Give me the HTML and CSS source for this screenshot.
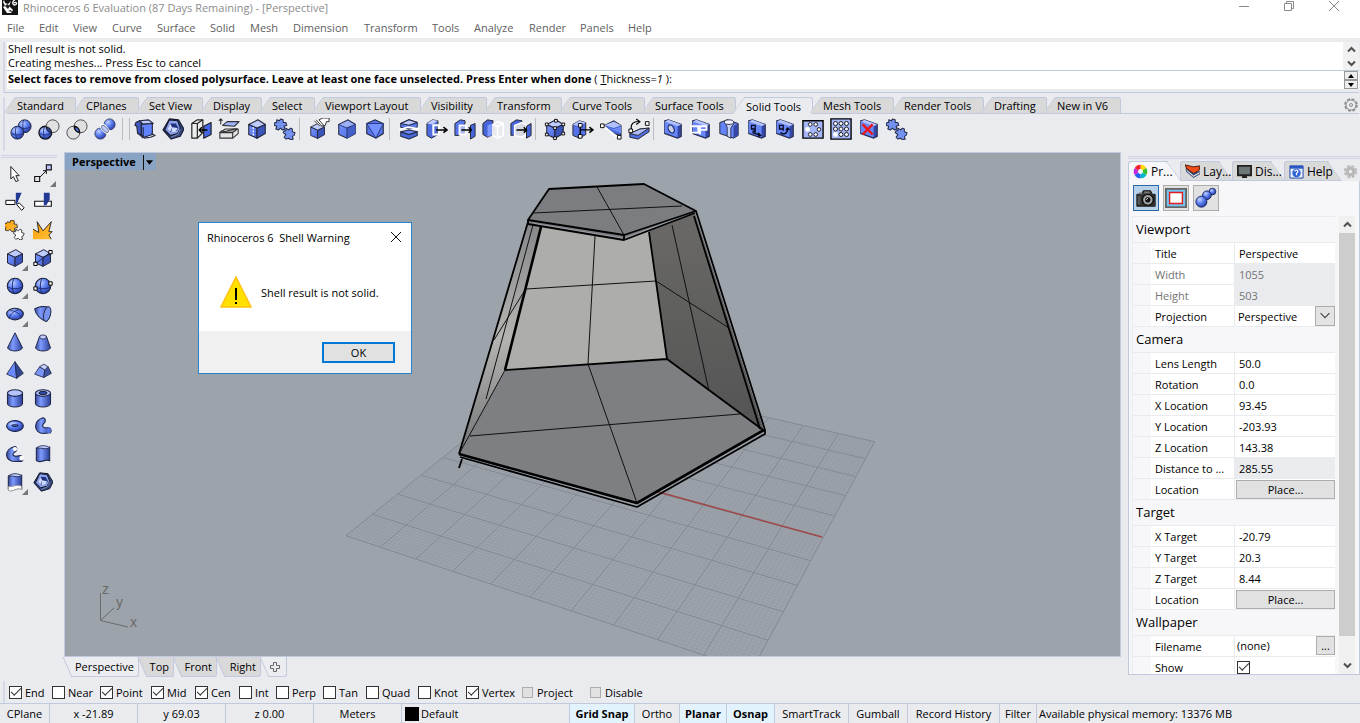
FILE: index.html
```html
<!DOCTYPE html>
<html lang="en">
<head>
<meta charset="utf-8">
<title>Rhinoceros 6 Evaluation (87 Days Remaining) - [Perspective]</title>
<link rel="stylesheet" href="styles.css">
</head>
<body>
<svg class="defs" width="0" height="0" aria-hidden="true">
  <defs>
    <radialGradient id="ball" cx=".35" cy=".3" r=".75"><stop offset="0" stop-color="#c6d3ff"/><stop offset=".45" stop-color="#6285f5"/><stop offset="1" stop-color="#2338a0"/></radialGradient>
    <linearGradient id="side"><stop offset="0" stop-color="#36499b"/><stop offset=".35" stop-color="#7d9bff"/><stop offset="1" stop-color="#2c3f96"/></linearGradient>
    <linearGradient id="face" x2="1" y2="1"><stop offset="0" stop-color="#7a98ff"/><stop offset="1" stop-color="#4a67dd"/></linearGradient>
    <linearGradient id="gold" x2="1" y2="1"><stop offset="0" stop-color="#ff9a00"/><stop offset="1" stop-color="#ffc23c"/></linearGradient>
  </defs>
  <symbol id="cube" viewBox="0 0 24 24"><g stroke="#23263a" stroke-width="1.2" stroke-linejoin="round"><path d="M3 7l9 4v11l-9-4z" fill="url(#face)"/><path d="M12 11l9-4v10l-9 5z" fill="#3c55bd"/><path d="M3 7l10-5 8 5-9 4z" fill="#becbff"/></g></symbol>
  <symbol id="sphere" viewBox="0 0 24 24"><circle cx="12" cy="12" r="9.3" fill="url(#ball)" stroke="#1c2236" stroke-width="1.3"/><path d="M3 13c5 3 13 3 18 0M11 3c-3 5-3 13 0 18" fill="none" stroke="#1d2d7a" stroke-width="1.2"/></symbol>
  <symbol id="union" viewBox="0 0 24 24"><circle cx="16" cy="9" r="7" fill="url(#ball)" stroke="#1c2236"/><circle cx="8" cy="16" r="7" fill="url(#ball)" stroke="#1c2236"/><path d="M2 17c4 2 8 2 12 0M7 9c-2 5-1 10 1 14M10 10c4 2 8 2 12 0M15 2c-2 5-1 10 1 13" fill="none" stroke="#20307a"/></symbol>
  <symbol id="diff" viewBox="0 0 24 24"><circle cx="8" cy="16" r="7" fill="url(#ball)" stroke="#111" stroke-width="1.4"/><circle cx="16" cy="9" r="7" fill="#ddd" fill-opacity=".75" stroke="#444"/><path d="M9 10a7 7 0 0 1 6 6 7 7 0 0 1-6-6z" fill="#2c469f" stroke="#111"/><path d="M2 17c4 2 8 2 11 0M7 10c-2 5-1 10 1 13" fill="none" stroke="#20307a"/></symbol>
  <symbol id="inter" viewBox="0 0 24 24"><g fill="#ddd" fill-opacity=".8" stroke="#444"><circle cx="8" cy="16" r="7"/><circle cx="16" cy="9" r="7"/></g><path d="M9 9a7 7 0 0 1 6 7 7 7 0 0 1-6-7z" fill="#4c6cde" stroke="#111" stroke-width="1.5"/></symbol>
  <symbol id="split" viewBox="0 0 24 24"><circle cx="17" cy="7" r="6" fill="url(#ball)" stroke="#34406a"/><circle cx="7" cy="17" r="6" fill="url(#ball)" stroke="#34406a"/><ellipse cx="12" cy="12" rx="2.4" ry="6" transform="rotate(-42 12 12)" fill="#c8d2f4" stroke="#fff" stroke-width="2"/><ellipse cx="12" cy="12" rx="2.2" ry="5" transform="rotate(-42 12 12)" fill="#bac9ff" stroke="#555" stroke-width=".8"/></symbol>
  <symbol id="shell" viewBox="0 0 24 24"><g stroke="#20263e" stroke-width="1.2" stroke-linejoin="round"><path d="M2 5l4-2 2 2v14l-4-2-1-8-2-1z" fill="#4058bd"/><path d="M6 3l10-1 5 4-11 1z" fill="#bdcaff"/><path d="M8 7l12-1v12l-9 3-3-3z" fill="#6283ff"/><path d="M10 10v12M19 17l4 2-5 2-7 1M5 17l5 5" fill="none"/></g></symbol>
  <symbol id="nut" viewBox="0 0 24 24"><g stroke="#15192c" stroke-width="1.2" stroke-linejoin="round"><path d="M8 1l10 1 6 10-4 8-10 3L1 13z" fill="#34477e"/><path d="M8 2l9 1 3 8-3 6-8 2-6-6z" fill="#8ba3ee"/></g><path d="M9 6l6 0 3 5-3 4-5 1-4-4z" fill="#20307a"/><path d="M9 6l2 4-2 5-3-3zM11 10l6 1-2 4-5 1z" fill="#cfdaff"/><path d="M20 12l-3 6-7 3" fill="none" stroke="#8090bb"/></symbol>
  <symbol id="caps" viewBox="0 0 24 24"><g stroke="#222" stroke-width="1.3" stroke-linejoin="round"><path d="M2 6l6-4h6v14l-6 6H2z" fill="#eceded"/><path d="M2 6h6v16M8 6l6-4" fill="none"/><path d="M15 9l8-4v13l-8 4z" fill="#4667e5"/><path d="M19 13h-9m3-3l-3 3 3 3" fill="none" stroke="#000" stroke-width="1.6"/></g></symbol>
  <symbol id="layers" viewBox="0 0 24 24"><g stroke="#333" stroke-width="1.2" stroke-linejoin="round"><path d="M2 16l6-4h14v5l-6 5H2z" fill="#e4e4e4"/><path d="M4 14c5 3 9-3 17-2l-5 4H2z" fill="#999"/><path d="M16 16v6" fill="none"/><path d="M5 8l5-4h13l-5 5z" fill="#9fb3ff"/><path d="M3 7V1M1 3l2-2 2 2" fill="none"/></g></symbol>
  <symbol id="boxdash" viewBox="0 0 24 24"><use href="#cube"/><path d="M8 10v10" stroke="#fff" stroke-width="1.5" stroke-dasharray="2 1.5"/></symbol>
  <symbol id="gearpair" viewBox="0 0 24 24"><g fill="#7493f0" stroke="#222946" stroke-width="1.1" stroke-linejoin="round"><path d="M3 2l3 1 1-2 3 1 0 3 3 0 1 3-3 1 1 3-3 1-2-2-2 2-3-1 1-3-3-1 1-3 2 0z"/><path d="M13 11l3 2 2-2 2 1v3l3 1-1 3-2 1 1 3-3 1-2-2-3 1-2-2 2-3-3-2 1-2 2 0z"/></g></symbol>
  <symbol id="cubeline" viewBox="0 0 24 24"><path d="M3 7l10-5 8 5v10l-9 5-9-4z" fill="url(#face)" stroke="#252942" stroke-width="1.2"/><path d="M12 11v11l9-5V7z" fill="#4460c9"/><path d="M3 7l9 4 9-4M12 11v11M12 11l8-5" fill="none" stroke="#27336c"/><path d="M4 7l9-4 7 4-8 3z" fill="#9cb0f5"/></symbol>
  <symbol id="cubehand" viewBox="0 0 24 24"><use href="#cube" x="0" y="4" width="21" height="20"/><path d="M7 3l7 7 5-2 1-4h3V0h-7l-4 2z" fill="#fff"/><path d="M7 3l6 6M9 2l6 7M12 2l5 6M14 9l5-1 1-4h3V0h-7l-4 2" fill="none" stroke="#222" stroke-width="1"/></symbol>
  <symbol id="cubetri" viewBox="0 0 24 24"><path d="M3 6l9-4 9 4v11l-8 5-10-5z" fill="#5674e8" stroke="#252942" stroke-width="1.2"/><path d="M3 6h18l-8 16z" fill="#7290ff" stroke="#26377c"/></symbol>
  <symbol id="slab" viewBox="0 0 24 24"><g stroke="#222942" stroke-width="1.1" stroke-linejoin="round"><path d="M3 6l9-4 9 3v5l-9 2-9-2z" fill="#5b7af2"/><path d="M3 6l9-4 9 3-9 3z" fill="#becbff"/><path d="M3 15l9 3 9-3v4l-9 4-9-3z" fill="#4966d8"/><path d="M3 15l9-2 9 2-9 3z" fill="#6d8aff"/></g><path d="M1 13l10-3 12 2" fill="none" stroke="#fff" stroke-width="2"/></symbol>
  <symbol id="pull" viewBox="0 0 24 24"><path d="M1 6l6-4 6 1v15l-7 4-5-3z" fill="#4e6cdf" stroke="#222"/><path d="M1 6l6-4 6 1-6 4z" fill="#becaff"/><path d="M8 8h6v10H8z" fill="none" stroke="#fff" stroke-width="2.2"/><path d="M11 13h12m-4-3l4 3-4 3" fill="none" stroke="#000" stroke-width="1.6"/></symbol>
  <symbol id="pull2" viewBox="0 0 24 24"><path d="M1 6l6-4 5 1v4L6 9v10l-5 0z" fill="#5775ec" stroke="#222"/><path d="M6 8h7v10H6z" fill="#aab8e8" stroke="#fff" stroke-width="2"/><path d="M18 8l5-2v14l-5 3z" fill="#4565e1" stroke="#222"/><path d="M8 13h11m-3-3l3 3-3 3" fill="none" stroke="#000" stroke-width="1.6"/></symbol>
  <symbol id="ghost" viewBox="0 0 24 24"><path d="M1 6l5-4 6 1v15l-6 3-5-3z" fill="#4664d8" stroke="#222"/><path d="M6 8l6-2v12l-6 3z" fill="#7e99ff"/><path d="M12 7l5-3 6 2v13l-6 3-5-3zM12 7l5 2 6-3M17 9v13" fill="none" stroke="#fff" stroke-width="1.7"/></symbol>
  <symbol id="ghost2" viewBox="0 0 24 24"><path d="M1 6l6-4 6 1v15l-12 1z" fill="#4765db" stroke="#222"/><path d="M5 8l8-3 5 3v10l-5 3-8-2z" fill="#d9dbe2" stroke="#fff" stroke-width="1.6"/><path d="M18 9l5-3v13l-5 3z" fill="#4765db" stroke="#222"/><path d="M7 13h11m-3-3l3 3-3 3" fill="none" stroke="#000" stroke-width="1.6"/></symbol>
  <symbol id="cubepts" viewBox="0 0 24 24"><use href="#cube"/><g fill="#fff" stroke="#000"><path d="M1.500 5.500h3v3h-3zM11.500 1.500h3v3h-3zM19.500 5.500h3v3h-3zM10.500 9.500h3v3h-3zM1.500 16.500h3v3h-3zM10.500 20.500h3v3h-3zM19.500 15.500h3v3h-3z"/></g></symbol>
  <symbol id="cubemove" viewBox="0 0 24 24"><path d="M1 7l7-4 7 2v13l-7 4-7-3z" fill="#5573e8" stroke="#222"/><path d="M1 7l7-4 7 2-7 4z" fill="#bac7ff"/><path d="M9 6v14M9 13h14m-4-3l4 3-4 3" fill="none" stroke="#000" stroke-width="1.5"/><path d="M7 6h4v4H7zM7 18h4v4H7z" fill="#fff" stroke="#000"/></symbol>
  <symbol id="wedge" viewBox="0 0 24 24"><path d="M5 8l10-5 8 5v11l-9-2z" fill="#4763cf" stroke="#222"/><path d="M5 8l10-4 8 4-8 3z" fill="#b3c2ff"/><path d="M5 9l10 3 8-3v8z" fill="#6b89fb"/><path d="M4 9l15 12" stroke="#fff" stroke-width="2"/><path d="M.5 6.500h4v4h-4zM19 19h4v4h-4z" fill="#fff" stroke="#000"/></symbol>
  <symbol id="fold" viewBox="0 0 24 24"><path d="M2 17l11-5 10-1v4l-12 8-9-2z" fill="#506ee3" stroke="#222"/><path d="M2 17l9 2 12-8-10 1z" fill="#afbdff" stroke="#222"/><path d="M4 13C2 7 6 3 13 4m-4-3l4 3-4 3" fill="none" stroke="#000" stroke-width="1.3"/><path d="M1 12h4v4H1zM19 4h4v4h-4z" fill="#fff" stroke="#000"/></symbol>
  <symbol id="plate" viewBox="0 0 24 24"><path d="M3 3l4-1 14 5v13l-4 2-14-5z" fill="#3447a6" stroke="#252b49" stroke-width="1.2"/><path d="M3 4l14 5v12L3 16z" fill="#6887fa"/><path d="M3 4l4-2 14 5-4 2z" fill="#b2c1ff"/></symbol>
  <symbol id="hole" viewBox="0 0 24 24"><use href="#plate"/><ellipse cx="10" cy="12" rx="3" ry="4.5" transform="rotate(-28 10 12)" fill="#c9d1e8" stroke="#162664" stroke-width="1.2"/></symbol>
  <symbol id="rib" viewBox="0 0 24 24"><use href="#plate"/><path d="M1 9h8v7H1zM11 18V9h7v4h-7" fill="none" stroke="#fff" stroke-width="2"/></symbol>
  <symbol id="bolt" viewBox="0 0 24 24"><path d="M2 5l8-3 12 4v13l-5 3-15-5z" fill="#6584f9" stroke="#222"/><path d="M17 9l5-3v13l-5 3z" fill="#3548a5"/><path d="M7 4l3 6v10l4 2V11l4-6z" fill="#c8d2f5" stroke="#293050"/><ellipse cx="12" cy="4.500" rx="5" ry="2.500" fill="#f2f4ff" stroke="#293050"/></symbol>
  <symbol id="holemove" viewBox="0 0 24 24"><use href="#plate"/><path d="M6 8v4h4V8zM10 9v6l-3-1M7 16l9 3m-3-3l3 3-3 1" fill="none" stroke="#050a24" stroke-width="1.5"/></symbol>
  <symbol id="holerot" viewBox="0 0 24 24"><use href="#plate"/><path d="M6 8v4h4V8zM10 9v5M7 16c4 3 8 1 8-5m-2 2l2-2 2 2" fill="none" stroke="#050a24" stroke-width="1.5"/></symbol>
  <symbol id="ring" viewBox="0 0 24 24"><path d="M1 3h22v19H1z" fill="#a5b6f8" stroke="#000" stroke-width="1.5"/><g fill="#fff" stroke="#111"><circle cx="6" cy="12.500" r="2.600" stroke="none"/><circle cx="9" cy="7" r="2"/><circle cx="15" cy="7" r="2"/><circle cx="18.500" cy="12.500" r="2"/><circle cx="15" cy="18" r="2"/><circle cx="9" cy="18" r="2"/></g></symbol>
  <symbol id="array" viewBox="0 0 24 24"><path d="M1 1h22v22H1z" fill="#a5b6f8" stroke="#000" stroke-width="1.5"/><g fill="#f1f3fc" stroke="#111"><circle cx="6" cy="6" r="2.200"/><circle cx="12" cy="6" r="2.200"/><circle cx="18" cy="6" r="2.200"/><circle cx="6" cy="12" r="2.200"/><circle cx="12" cy="12" r="2.200"/><circle cx="18" cy="12" r="2.200"/><circle cx="6" cy="18" r="2.600" fill="#fff" stroke="none"/><circle cx="12" cy="18" r="2.200"/><circle cx="18" cy="18" r="2.200"/></g></symbol>
  <symbol id="holedel" viewBox="0 0 24 24"><use href="#plate"/><path d="M5 7l11 11M16 7L5 18" stroke="#f01414" stroke-width="2.600"/></symbol>

  <symbol id="arrow" viewBox="0 0 24 24"><path d="M7 3v15l3-3 3 6 3-1-3-6h4z" fill="#fff" stroke="#222" stroke-width="1.2"/></symbol>
  <symbol id="pointline" viewBox="0 0 24 24"><path d="M7 17L16 8m-4 0h4v4" fill="none" stroke="#111" stroke-width="1.2"/><path d="M16 1h6v6h-6z" fill="#b7c4ff" stroke="#111" stroke-width="1.3"/><path d="M2 15h6v6H2z" fill="#e1e1e1" stroke="#111" stroke-width="1.3"/></symbol>
  <symbol id="trim" viewBox="0 0 24 24"><path d="M1 10h11v5H1zM14 15l3-2 6 6-3 3z" fill="#fff" stroke="#111" stroke-width="1.2"/><path d="M13 1h7l-6 14-1-1z" fill="#223a94"/></symbol>
  <symbol id="cut" viewBox="0 0 24 24"><path d="M2 11h20v6H2z" fill="#fff" stroke="#111" stroke-width="1.3"/><path d="M13 1h7v8l-4 7h-3z" fill="#223a94"/></symbol>
  <symbol id="join" viewBox="0 0 24 24"><g stroke="#333" stroke-width="1.1" stroke-linejoin="round"><path d="M13 11l3 2 2-2 2 1v3l3 1-1 3-2 1 1 3-3 1-2-2-3 1-2-2 2-3-3-2 1-2 2 0z" fill="#fff"/><path d="M3 2l3 1 1-3 4 1 0 4 3 0 1 4-4 1 1 3-4 1-2-3-2 2-4-1 1-3-2-2 1-3 2 0z" fill="url(#gold)"/></g></symbol>
  <symbol id="explode" viewBox="0 0 24 24"><path d="M0 11l7 4L5 2l7 11L22 2l-3 12 4 0-4 4 3 5H0z" fill="url(#gold)"/><path d="M0 11l7 4L5 2l7 11L22 2l-3 12 4 0-4 4 3 5" fill="none" stroke="#222" stroke-width="1.100"/></symbol>
  <symbol id="cubediag" viewBox="0 0 24 24"><use href="#cube"/><path d="M3 19L21 5" stroke="#141936"/><path d="M1 17h4v4H1zM19 3h4v4h-4z" fill="#fff" stroke="#000" stroke-width="1.2"/></symbol>
  <symbol id="spherepts" viewBox="0 0 24 24"><use href="#sphere"/><path d="M1 13h4v4H1zM19 7h4v4h-4z" fill="#fff" stroke="#000" stroke-width="1.2"/></symbol>
  <symbol id="ellipsoid" viewBox="0 0 24 24"><ellipse cx="12" cy="12" rx="10" ry="7" fill="url(#ball)" stroke="#1c2236" stroke-width="1.3"/><path d="M5 17c2-6 6-9 12-10M20 16C17 11 12 8 6 8" fill="none" stroke="#1d2d7a" stroke-width="1.1"/></symbol>
  <symbol id="parab" viewBox="0 0 24 24"><path d="M2 6c4-3 12-4 17-2 4 4 2 13-3 17C9 19 3 12 2 6z" fill="url(#side)" stroke="#222943" stroke-width="1.3"/><ellipse cx="17" cy="12" rx="4" ry="9" transform="rotate(14 17 12)" fill="#7893eb" stroke="#222943"/></symbol>
  <symbol id="cone" viewBox="0 0 24 24"><path d="M12 1L3 19c2 5 16 5 18 0z" fill="url(#side)" stroke="#20284a" stroke-width="1.2"/></symbol>
  <symbol id="tcone" viewBox="0 0 24 24"><path d="M8 5L3 19c2 5 16 5 18 0L16 5z" fill="url(#side)" stroke="#20284a" stroke-width="1.2"/><ellipse cx="12" cy="6" rx="4" ry="2.5" fill="#c2cfff" stroke="#20284a"/></symbol>
  <symbol id="pyr" viewBox="0 0 24 24"><path d="M12 2L2 17l12 5z" fill="#6989fc" stroke="#20284a"/><path d="M12 2l10 14-8 6z" fill="#32458f" stroke="#20284a"/></symbol>
  <symbol id="tpyr" viewBox="0 0 24 24"><path d="M8 8L2 17l11 4 1-9z" fill="#7894f6" stroke="#20284a"/><path d="M14 12l4-4 4 8-9 5z" fill="#3e529f" stroke="#20284a"/><path d="M8 8l5-3 5 3-4 4z" fill="#c5d0fb" stroke="#20284a"/></symbol>
  <symbol id="cyl" viewBox="0 0 24 24"><path d="M3 6v13c2 5 16 5 18 0V6z" fill="url(#side)" stroke="#20284a" stroke-width="1.3"/><ellipse cx="12" cy="6" rx="9" ry="4" fill="#b5c4ff" stroke="#20284a" stroke-width="1.3"/></symbol>
  <symbol id="tube" viewBox="0 0 24 24"><use href="#cyl"/><ellipse cx="12" cy="6" rx="5" ry="2" fill="#304caa" stroke="#111"/></symbol>
  <symbol id="torus" viewBox="0 0 24 24"><ellipse cx="12" cy="12" rx="10" ry="6.500" fill="url(#ball)" stroke="#111a42" stroke-width="1.3"/><ellipse cx="12" cy="11.500" rx="3.500" ry="1" fill="#e9edf9" stroke="#102060" stroke-width="1.5"/></symbol>
  <symbol id="pipe" viewBox="0 0 24 24"><path d="M12 2C0 5 0 21 13 21l8-1c2-3 0-7-4-6-6 1-7-3-3-6 2-3 0-6-2-6z" fill="url(#side)" stroke="#20284a" stroke-width="1.3"/><ellipse cx="19" cy="17" rx="2.500" ry="3.500" fill="#5572df"/></symbol>
  <symbol id="pipe2" viewBox="0 0 24 24"><path d="M12 3C-2 6-1 21 12 21h8c3-3 1-8-3-7-8 2-10-2-4-5 2-3 1-6-1-6z" fill="url(#side)" stroke="#20284a" stroke-width="1.3"/><circle cx="12" cy="6" r="2.500" fill="#fff"/><circle cx="20" cy="17" r="2.800" fill="#fff"/></symbol>
  <symbol id="extr" viewBox="0 0 24 24"><path d="M4 5c4-4 7 2 16-1v16c-6-3-10 4-16 0z" fill="url(#side)" stroke="#20284a" stroke-width="1.3"/><path d="M4 6c4-6 12-4 16-2-5 4-11-1-16 2z" fill="#bdcaff" stroke="#20284a"/></symbol>
  <symbol id="extr2" viewBox="0 0 24 24"><use href="#extr"/><path d="M4 17c5 2 9-3 16 0v4c-6-3-11 4-16 1z" fill="#fff" stroke="#888"/></symbol>
  <symbol id="gear" viewBox="0 0 16 16"><circle cx="8" cy="8" r="6" fill="none" stroke="currentColor" stroke-width="1.600" stroke-dasharray="3 1.700"/><circle cx="8" cy="8" r="5" fill="none" stroke="currentColor"/><circle cx="8" cy="8" r="1.500" fill="none" stroke="currentColor"/></symbol>
  <symbol id="gearfull" viewBox="0 0 16 16"><circle cx="8" cy="8" r="6.200" fill="none" stroke="currentColor" stroke-width="1.800" stroke-dasharray="3 1.900"/><circle cx="8" cy="8" r="3.700" fill="none" stroke="currentColor" stroke-width="3.500"/></symbol>
</svg>

<div class="app">
  <header class="titlebar">
    <svg class="logo" viewBox="0 0 16 15"><path d="M0 0h16v15H0z" fill="#151515"/><path d="M2 0l1 3 3 1 3-3-2 5 4 4-2 3H5L1 7l2-1-2-4z" fill="#fff"/><path d="M5 4l3 2-2 3-3-3zM6 11l3-1 1 2z" fill="#222"/><path d="M13 0c-3 1-3 5 0 5 3-1 1-4-1-2" fill="none" stroke="#fff" stroke-width="1.3"/></svg>
    <h1>Rhinoceros 6 Evaluation (87 Days Remaining) - [Perspective]</h1>
    <div class="winbtns">
      <button aria-label="Minimize"><svg viewBox="0 0 12 12"><path d="M1 6.5h10"/></svg></button>
      <button aria-label="Restore"><svg viewBox="0 0 12 12"><path d="M1.500 3.500h7v7h-7zM3.500 3.500v-2h7v7h-2"/></svg></button>
      <button aria-label="Close"><svg viewBox="0 0 12 12"><path d="M1 1l10 10M11 1L1 11"/></svg></button>
    </div>
  </header>
  <nav class="menubar"><button>File</button><button>Edit</button><button>View</button><button>Curve</button><button>Surface</button><button>Solid</button><button>Mesh</button><button>Dimension</button><button>Transform</button><button>Tools</button><button>Analyze</button><button>Render</button><button>Panels</button><button>Help</button></nav>

  <section class="command">
    <div class="history">
      <div class="lines"><p>Shell result is not solid.</p><p>Creating meshes... Press Esc to cancel</p></div>
      <div class="updown"><button aria-label="Scroll up"><svg viewBox="0 0 9 7"><path d="M1 5.500L4.500 2 8 5.500"/></svg></button><button aria-label="Scroll down"><svg viewBox="0 0 9 7"><path d="M1 1.500L4.500 5 8 1.500"/></svg></button></div>
    </div>
    <div class="prompt">
      <p><b>Select faces to remove from closed polysurface. Leave at least one face unselected. Press Enter when done</b> ( <u>T</u>hickness=<i>1</i> ):</p>
      <div class="spin"><button aria-label="Previous"><svg viewBox="0 0 6 4"><path d="M0 4l3-4 3 4z"/></svg></button><button aria-label="Next"><svg viewBox="0 0 6 4"><path d="M0 0l3 4 3-4z"/></svg></button></div>
    </div>
  </section>

  <section class="toolbars">
    <div class="tabstrip">
      <button>Standard</button><button>CPlanes</button><button>Set View</button><button>Display</button><button>Select</button><button>Viewport Layout</button><button>Visibility</button><button>Transform</button><button>Curve Tools</button><button>Surface Tools</button><button class="active">Solid Tools</button><button>Mesh Tools</button><button>Render Tools</button><button>Drafting</button><button>New in V6</button>
      <button class="gearbtn" aria-label="Toolbar options"><svg><use href="#gear"/></svg></button>
    </div>
    <div class="tools">
      <button aria-label="Boolean union"><svg><use href="#union"/></svg></button><button aria-label="Boolean difference"><svg><use href="#diff"/></svg></button><button aria-label="Boolean intersection"><svg><use href="#inter"/></svg></button><button aria-label="Boolean split"><svg><use href="#split"/></svg></button>
      <span class="sep double"></span>
      <button aria-label="Shell"><svg><use href="#shell"/></svg></button><button aria-label="Offset solid"><svg><use href="#nut"/></svg></button><button aria-label="Cap holes"><svg><use href="#caps"/></svg></button><button aria-label="Extract surface"><svg><use href="#layers"/></svg></button><button aria-label="Merge faces"><svg><use href="#boxdash"/></svg></button><button aria-label="Unjoin edge"><svg><use href="#gearpair"/></svg></button>
      <span class="sep"></span>
      <button aria-label="Edit fillet"><svg><use href="#cubehand"/></svg></button><button aria-label="Fillet edge"><svg><use href="#cubeline"/></svg></button><button aria-label="Chamfer edge"><svg><use href="#cubetri"/></svg></button>
      <span class="sep"></span>
      <button aria-label="Wire cut"><svg><use href="#slab"/></svg></button><button aria-label="Move face"><svg><use href="#pull"/></svg></button><button aria-label="Extrude face"><svg><use href="#pull2"/></svg></button><button aria-label="Move untrimmed face"><svg><use href="#ghost"/></svg></button><button aria-label="Move face to boundary"><svg><use href="#ghost2"/></svg></button>
      <span class="sep"></span>
      <button aria-label="Solid points on"><svg><use href="#cubepts"/></svg></button><button aria-label="Move edge"><svg><use href="#cubemove"/></svg></button><button aria-label="Split face"><svg><use href="#wedge"/></svg></button><button aria-label="Fold face"><svg><use href="#fold"/></svg></button>
      <span class="sep"></span>
      <button aria-label="Round hole"><svg><use href="#hole"/></svg></button><button aria-label="Make hole"><svg><use href="#rib"/></svg></button><button aria-label="Revolved hole"><svg><use href="#bolt"/></svg></button><button aria-label="Move hole"><svg><use href="#holemove"/></svg></button><button aria-label="Rotate hole"><svg><use href="#holerot"/></svg></button><button aria-label="Array hole polar"><svg><use href="#ring"/></svg></button><button aria-label="Array hole"><svg><use href="#array"/></svg></button><button aria-label="Delete hole"><svg><use href="#holedel"/></svg></button><button aria-label="Solid editing"><svg><use href="#gearpair"/></svg></button>
    </div>
  </section>

  <main class="work">
    <aside class="palette">
      <button aria-label="Select"><svg><use href="#arrow"/></svg></button><button class="more" aria-label="Point"><svg><use href="#pointline"/></svg></button>
      <button aria-label="Trim"><svg><use href="#trim"/></svg></button><button aria-label="Split"><svg><use href="#cut"/></svg></button>
      <button aria-label="Join"><svg><use href="#join"/></svg></button><button aria-label="Explode"><svg><use href="#explode"/></svg></button>
      <button class="more" aria-label="Box"><svg><use href="#cube"/></svg></button><button aria-label="Box diagonal"><svg><use href="#cubediag"/></svg></button>
      <button class="more" aria-label="Sphere"><svg><use href="#sphere"/></svg></button><button aria-label="Sphere diameter"><svg><use href="#spherepts"/></svg></button>
      <button class="more" aria-label="Ellipsoid"><svg><use href="#ellipsoid"/></svg></button><button aria-label="Paraboloid"><svg><use href="#parab"/></svg></button>
      <button aria-label="Cone"><svg><use href="#cone"/></svg></button><button aria-label="Truncated cone"><svg><use href="#tcone"/></svg></button>
      <button aria-label="Pyramid"><svg><use href="#pyr"/></svg></button><button aria-label="Truncated pyramid"><svg><use href="#tpyr"/></svg></button>
      <button aria-label="Cylinder"><svg><use href="#cyl"/></svg></button><button aria-label="Tube"><svg><use href="#tube"/></svg></button>
      <button aria-label="Torus"><svg><use href="#torus"/></svg></button><button aria-label="Pipe"><svg><use href="#pipe"/></svg></button>
      <button aria-label="Pipe round caps"><svg><use href="#pipe2"/></svg></button><button aria-label="Extrude curve"><svg><use href="#extr"/></svg></button>
      <button class="more" aria-label="Extrude surface"><svg><use href="#extr2"/></svg></button><button aria-label="Shell solid"><svg><use href="#nut"/></svg></button>
    </aside>

    <section class="views">
      <div class="viewport">
        <svg class="scene" viewBox="65 153 1055 503" preserveAspectRatio="xMidYMid slice">
          <defs>
            <linearGradient id="wallR" x2="0" y2="1"><stop offset="0" stop-color="#6a6967"/><stop offset="1" stop-color="#545454"/></linearGradient>
            <linearGradient id="wallL" x2="0" y2="1"><stop offset="0" stop-color="#858688"/><stop offset=".5" stop-color="#b4b4b2"/><stop offset="1" stop-color="#747577"/></linearGradient>
          </defs>
          <path id="minor" class="minor"/>
          <path id="major" class="major"/>
          <path class="xaxis" d="M655 491L822 537"/>
          <path fill="#7e7f82" d="M505 370l162-11 97 72-127 73-178-50z"/>
          <path fill="#adadab" d="M541 226l83 13 25-8 18 128-162 11z"/>
          <path fill="url(#wallR)" d="M649 231l46-18 69 218-97-72z"/>
          <path fill="url(#wallL)" d="M528 221l13 5-36 144-36 66-10 18z"/>
          <path fill="#7c7d80" d="M549 189l95-5 52 27-72 27-96-16z"/>
          <g class="thin">
            <path d="M597 187l27 48M533 213l149-7M595 236l-7 128 49 139M526 289l130-8 73 47M672 225l37 166M470 436l270-22M533 225l-47 174M525 290l-31 50M505 370l-36 66-10 18"/>
          </g>
          <g class="edge">
            <path d="M549 189l95-5 52 27-72 24-96-15z"/>
            <path d="M528 220v4l96 16 71-27M624 235v5M649 232l18 127-162 11M667 359l96 71"/>
            <path d="M528 222l-69 232M460 457l177 50 128-73v-4L696 211M694 216l66 213M462 459l-3 9"/>
          </g>
          <path class="heavy" d="M541 227l-36 143M459 454l178 49 127-73"/>
        </svg>
        <div class="viewlabel"><b>Perspective</b><button aria-label="Viewport menu"><svg viewBox="0 0 8 5"><path d="M0 0h8L4 5z"/></svg></button></div>
        <svg class="axes" viewBox="0 0 44 50"><path d="M5.500 13v27.500L33 47M5.500 40.500L19 28"/><text x="7" y="14">z</text><text x="21" y="27">y</text><text x="35" y="47">x</text></svg>
      </div>
      <div class="viewtabs"><button class="active">Perspective</button><button>Top</button><button>Front</button><button>Right</button><button class="add" aria-label="New viewport"><svg viewBox="0 0 10 10"><path d="M3.500.5h3v3h3v3h-3v3h-3v-3h-3v-3h3z"/></svg></button></div>
    </section>

    <aside class="side">
      <div class="sidetabs">
        <button class="active"><svg viewBox="0 0 16 16"><g fill="none" stroke-width="4.500"><path d="M8 3a5 5 0 0 1 4.300 2.500" stroke="#ffd800"/><path d="M12.300 5.500a5 5 0 0 1 0 5" stroke="#35c22d"/><path d="M12.300 10.500A5 5 0 0 1 8 13" stroke="#00b5c9"/><path d="M8 13a5 5 0 0 1-4.300-2.500" stroke="#2460ee"/><path d="M3.700 10.500a5 5 0 0 1 0-5" stroke="#c529df"/><path d="M3.700 5.500A5 5 0 0 1 8 3" stroke="#f3202a"/></g></svg>Pr...</button>
        <button><svg viewBox="0 0 16 16"><path d="M1 8l8 7 7-4V8H9L1 4z" fill="#2459bd"/><path d="M1 5l8 7 7-4v2l-7 4-7-6z" fill="#eee" stroke="#444" stroke-width=".7"/><path d="M0 1l9 2 7-1-1 5-6 3-7-5z" fill="#f04d1b" stroke="#4a1408"/></svg>Lay...</button>
        <button><svg viewBox="0 0 16 16"><path d="M1 2h14v10H1z" fill="#6b7877" stroke="#222" stroke-width="2"/><path d="M5 15h6l-1-3H6z" fill="#222"/></svg>Dis...</button>
        <button><svg viewBox="0 0 16 16"><path d="M1 2h14v13H1z" fill="#e7eefc" stroke="#1943a7"/><path d="M1 2h14v3H1z" fill="#2957c6"/><circle cx="8" cy="9.500" r="4.500" fill="#3063d4"/><path d="M6 8c1-3 5-1 3 1l-1 1v2" fill="none" stroke="#fff" stroke-width="1.300"/></svg>Help</button>
        <button class="sidegear" aria-label="Panel options"><svg><use href="#gearfull"/></svg></button>
      </div>
      <div class="pages">
        <button class="on" aria-label="Viewport properties"><svg viewBox="0 0 24 24"><path d="M2 8h5l2-4h8l2 4h3v13H2z" fill="#333" stroke="#171717"/><path d="M4 6h4v2H4zM10 5h6v2h-6z" fill="#777"/><circle cx="14" cy="14" r="6" fill="#999" stroke="#111" stroke-width="1.500"/><circle cx="14" cy="14" r="3.700" fill="#161616" stroke="#ccc"/><path d="M12 14l2-2" stroke="#fff"/><path d="M3 10h3v9H3z" fill="#555"/></svg></button>
        <button aria-label="Material"><svg viewBox="0 0 24 24"><path d="M1 2h22v20H1z" fill="#71c4f4" stroke="#656565" stroke-width="2"/><path d="M5 6h14v12H5z" fill="#fff" stroke="#e01b1b" stroke-width="1.500"/></svg></button>
        <button aria-label="Texture mapping"><svg viewBox="0 0 24 24"><g fill="url(#ball)" stroke="#13245f"><circle cx="19" cy="5" r="3.600"/><circle cx="13" cy="9" r="4.700"/><circle cx="7" cy="16" r="6"/></g></svg></button>
      </div>
      <div class="propwrap">
        <div class="proplist">
          <table>
            <colgroup><col class="c1"><col class="c2"><col></colgroup>
            <tbody>
              <tr class="group"><th colspan="3">Viewport</th></tr>
              <tr><td></td><th><label for="p1">Title</label></th><td><input id="p1" value="Perspective"></td></tr>
              <tr class="off"><td></td><th><label for="p2">Width</label></th><td><input id="p2" value="1055" disabled></td></tr>
              <tr class="off"><td></td><th><label for="p3">Height</label></th><td><input id="p3" value="503" disabled></td></tr>
              <tr><td></td><th><label for="p4">Projection</label></th><td><div class="pick"><select id="p4"><option>Perspective</option></select><svg viewBox="0 0 9 6"><path d="M.5.500l4 4 4-4"/></svg></div></td></tr>
              <tr class="group"><th colspan="3">Camera</th></tr>
              <tr><td></td><th><label for="p5">Lens Length</label></th><td><input id="p5" value="50.0"></td></tr>
              <tr><td></td><th><label for="p6">Rotation</label></th><td><input id="p6" value="0.0"></td></tr>
              <tr><td></td><th><label for="p7">X Location</label></th><td><input id="p7" value="93.45"></td></tr>
              <tr><td></td><th><label for="p8">Y Location</label></th><td><input id="p8" value="-203.93"></td></tr>
              <tr><td></td><th><label for="p9">Z Location</label></th><td><input id="p9" value="143.38"></td></tr>
              <tr><td></td><th><label for="p10">Distance to ...</label></th><td class="ro"><input id="p10" value="285.55" readonly></td></tr>
              <tr><td></td><th>Location</th><td><button class="place">Place...</button></td></tr>
              <tr class="group"><th colspan="3">Target</th></tr>
              <tr><td></td><th><label for="p11">X Target</label></th><td><input id="p11" value="-20.79"></td></tr>
              <tr><td></td><th><label for="p12">Y Target</label></th><td><input id="p12" value="20.3"></td></tr>
              <tr><td></td><th><label for="p13">Z Target</label></th><td><input id="p13" value="8.44"></td></tr>
              <tr><td></td><th>Location</th><td><button class="place">Place...</button></td></tr>
              <tr class="group"><th colspan="3">Wallpaper</th></tr>
              <tr><td></td><th>Filename</th><td><div class="file"><span>(none)</span><button>...</button></div></td></tr>
              <tr><td></td><th><label for="p14">Show</label></th><td class="show"><input id="p14" type="checkbox" checked></td></tr>
            </tbody>
          </table>
        </div>
        <div class="scroll"><button aria-label="Scroll up"><svg viewBox="0 0 9 7"><path d="M1 5.500L4.500 2 8 5.500"/></svg></button><div class="thumb"></div><button aria-label="Scroll down"><svg viewBox="0 0 9 7"><path d="M1 1.500L4.500 5 8 1.500"/></svg></button></div>
      </div>
    </aside>
  </main>

  <section class="osnap">
    <label><input type="checkbox" checked>End</label><label><input type="checkbox">Near</label><label><input type="checkbox" checked>Point</label><label><input type="checkbox" checked>Mid</label><label><input type="checkbox" checked>Cen</label><label><input type="checkbox">Int</label><label><input type="checkbox">Perp</label><label><input type="checkbox">Tan</label><label><input type="checkbox">Quad</label><label><input type="checkbox">Knot</label><label><input type="checkbox" checked>Vertex</label><label class="flat"><input type="checkbox">Project</label><label class="flat"><input type="checkbox">Disable</label>
  </section>

  <footer class="status">
    <button>CPlane</button><span>x -21.89</span><span>y 69.03</span><span>z 0.00</span><span>Meters</span><button class="layer"><i></i>Default</button><button class="on">Grid Snap</button><button>Ortho</button><button class="on">Planar</button><button class="on">Osnap</button><button>SmartTrack</button><button>Gumball</button><button>Record History</button><button>Filter</button><span class="mem">Available physical memory: 13376 MB</span>
  </footer>
</div>

<div class="dialog" role="dialog" aria-labelledby="dlg">
  <div class="dlghead"><h2 id="dlg">Rhinoceros 6&nbsp; Shell Warning</h2><button aria-label="Close"><svg viewBox="0 0 12 12"><path d="M1 1l10 10M11 1L1 11"/></svg></button></div>
  <div class="dlgbody"><svg viewBox="0 0 32 32"><path d="M16 1l15 30H1z" fill="#ffe000" stroke="#ffc20e" stroke-width="1.500"/><path d="M15 12h2v12h-2zM15 26h2v2h-2z" fill="#000"/></svg><p>Shell result is not solid.</p></div>
  <div class="dlgfoot"><button>OK</button></div>
</div>
<script src="grid.js"></script>
</body>
</html>
```

FILE: styles.css
```css
:root {
  --line: #c1c9de;
  --bg: #eaebef;
  --tab: #d9d9d9;
}
* { box-sizing: border-box; }
body {
  margin: 0;
  background: var(--bg);
  color: #000;
  font: 11px/15px "Open Sans", "Noto Sans", sans-serif;
}
button, input, select { font: inherit; color: inherit; margin: 0; padding: 0; border: 0; background: none; border-radius: 0; }
p, h1, h2 { margin: 0; font-size: inherit; font-weight: normal; }
svg { display: block; flex: none; }
.defs { position: absolute; }
.app { display: flex; flex-direction: column; height: 100vh; overflow: hidden; }

.titlebar { display: flex; align-items: flex-start; height: 18px; background: #fff; color: #8c8c8c; padding-left: 2px; flex: none; }
.logo { width: 16px; height: 15px; margin-right: 5px; }
.winbtns { display: flex; margin: 0 4px 0 auto; }
.winbtns button { width: 45px; display: grid; place-items: center; }
.winbtns svg { width: 12px; height: 12px; fill: none; stroke: #8a8a8a; }

.menubar { display: grid; grid-template-columns: 32px 34px 39px 45px 53px 40px 43px 71px 68px 42px 55px 51px 48px auto; justify-content: start; height: 20px; padding-left: 7px; background: #fff; color: #606060; flex: none; }
.menubar button { text-align: left; white-space: nowrap; line-height: 20px; }

.command { flex: none; margin: 4px 1px 0 3px; border-left: 2px solid #d5d9e6; padding: 0 0 3px 2px; border-bottom: 1px solid var(--line); }
.history { display: flex; background: #fff; border-bottom: 1px solid var(--line); height: 29px; }
.lines { flex: 1; padding-left: 1px; overflow: hidden; line-height: 14px; }
.updown { display: grid; width: 16px; background: #f0f0f0; }
.updown button, .scroll button { display: grid; place-items: center; }
.updown svg, .scroll svg { width: 9px; height: 7px; fill: none; stroke: #505050; stroke-width: 2; }
.prompt { display: flex; height: 18px; background: #fff; }
.prompt p { flex: 1; padding-left: 1px; white-space: nowrap; overflow: hidden; line-height: 16px; }
.spin { display: grid; width: 14px; margin-right: 1px; }
.spin button { border: 1px solid #999; background: #eee; display: grid; place-items: center; }
.spin svg { width: 6px; height: 4px; }

.toolbars { flex: none; margin: 4px 1px 0 3px; border-left: 2px solid #d5d9e6; height: 54px; }
.tabstrip { display: grid; grid-template-columns: 69px 63px 64px 59px 53px 106px 66px 75px 83px 91px 77px 81px 90px 63px 74px 1fr; height: 17px; border-bottom: 1px solid var(--line); margin-left: 2px; padding-left: 8px; }
.tabstrip button { position: relative; isolation: isolate; margin-right: 8px; padding-left: 2px; text-align: left; white-space: nowrap; line-height: 15px; background: var(--tab); border: 1px solid var(--line); border-width: 1px 1px 0 0; border-top-right-radius: 3px; }
.tabstrip button::before { content: ""; position: absolute; z-index: -1; left: -6px; top: -1px; bottom: 0; width: 12px; background: inherit; border: 1px solid var(--line); border-width: 1px 0 0 1px; transform: skewX(-34deg); border-top-left-radius: 3px; }
.tabstrip .active { background: var(--bg); margin-bottom: -1px; }
.tabstrip .gearbtn { background: none; border: 0; justify-self: end; margin: 0; color: #8c8c8c; }
.tabstrip .gearbtn::before { content: none; }
.gearbtn svg, .sidegear svg { width: 16px; height: 16px; }
.tools { display: flex; padding: 2px 0 0 2px; }
.tools button { width: 28px; height: 26px; display: grid; place-items: center; flex: none; }
.tools svg { width: 22px; height: 22px; }
.sep { width: 6px; border-left: 1px solid #bcbcc0; margin: 2px 0; flex: none; }
.sep.double { width: 12px; border-left: 0; display: flex; }
.sep.double::before { content: ""; width: 6px; margin-left: 3px; border: 1px solid #bcbcc0; border-width: 0 1px; }

.work { flex: 1; display: flex; min-height: 0; }
.palette { width: 56px; margin: 4px 6px 0 1px; display: grid; grid-template-columns: 28px 28px; grid-auto-rows: 28px; align-content: start; border-top: 3px double #cdd3e3; padding-top: 2px; }
.palette button { position: relative; display: grid; place-items: center; }
.palette svg { width: 20px; height: 20px; }
.palette .more::after { content: ""; position: absolute; right: 1px; bottom: 1px; border: 3px solid; border-color: transparent #777 #777 transparent; }

.views { flex: 1; min-width: 0; display: flex; flex-direction: column; margin: 1px 7px 0 1px; }
.viewport { flex: 1; min-height: 0; position: relative; background: #9da3ab; border: 1px solid var(--line); }
.scene { width: 100%; height: 100%; }
.minor, .major, .xaxis, .thin, .edge, .heavy { fill: none; }
.minor { stroke: #858b95; stroke-width: .5; opacity: .45; }
.major { stroke: #858993; stroke-width: 1; }
.xaxis { stroke: #a04747; stroke-width: 1.5; }
.thin { stroke: #111; stroke-width: 1; }
.edge { stroke: #000; stroke-width: 1.8; stroke-linejoin: round; }
.heavy { stroke: #000; stroke-width: 2.6; }
.viewlabel { position: absolute; left: 0; top: 0; display: flex; background: #88a3c3; line-height: 17px; padding-left: 7px; }
.viewlabel button { border-left: 1px solid #111; margin: 2px 0 0 7px; padding: 0 3px 0 2px; height: 15px; }
.viewlabel svg { width: 7px; height: 5px; }
.axes { position: absolute; left: 30px; bottom: 26px; width: 44px; height: 50px; fill: none; stroke: #6a6a6a; }
.axes text { fill: #6a6a6a; stroke: none; font: 14px "Liberation Sans", sans-serif; }
.viewtabs { display: grid; grid-template-columns: 75px 35px 43px 44px 26px; height: 24px; padding-bottom: 4px; flex: none; }
.viewtabs button { position: relative; isolation: isolate; background: var(--tab); border: 1px solid var(--line); border-width: 0 1px 1px 0; border-bottom-right-radius: 3px; margin-left: 7px; text-align: right; padding-right: 4px; white-space: nowrap; }
.viewtabs button::before { content: ""; position: absolute; z-index: -1; left: -4px; top: 0; bottom: -1px; width: 12px; background: inherit; border: 1px solid var(--line); border-width: 0 0 1px 1px; transform: skewX(24deg); }
.viewtabs .active, .viewtabs .add { background: #ecedf1; }
.viewtabs .add { display: grid; place-items: center; }
.viewtabs .add svg { width: 10px; height: 10px; fill: none; stroke: #666; }

.side { width: 232px; flex: none; display: flex; flex-direction: column; margin: 5px 0 6px; border-top: 3px double #cdd3e3; }
.sidetabs { display: grid; grid-template-columns: 52px 52px 52px 57px 1fr; height: 22px; padding-top: 2px; font-size: 12px; }
.sidetabs button { position: relative; isolation: isolate; display: flex; align-items: center; gap: 3px; margin-right: 12px; padding-left: 4px; background: var(--tab); border: 1px solid var(--line); border-width: 1px 0 1px 1px; border-top-left-radius: 3px; white-space: nowrap; }
.sidetabs button::after { content: ""; position: absolute; z-index: -1; right: -6px; top: -1px; bottom: -1px; width: 14px; background: inherit; border: 1px solid var(--line); border-width: 1px 1px 1px 0; transform: skewX(36deg); border-top-right-radius: 3px; }
.sidetabs .active, .sidetabs .active::after { background: #f7f7f9; border-bottom-color: #f7f7f9; }
.sidetabs svg { width: 15px; height: 15px; }
.sidetabs .sidegear { background: none; border: 0; margin: 0; padding: 0 0 0 2px; color: #b8b8b8; }
.sidetabs .sidegear::after { content: none; }
.pages { display: flex; gap: 4px; padding: 4px 4px 5px; background: #f7f7f9; border-left: 1px solid var(--line); border-right: 1px solid var(--line); }
.pages button { width: 26px; height: 26px; background: #e1e1e1; border: 1px solid #adadad; display: grid; place-items: center; }
.pages svg { width: 22px; height: 22px; }
.pages .on { background: #b8d2ea; border: 1px solid #2d69a8; }
.propwrap { flex: 1; min-height: 0; display: flex; background: #f7f7f9; border: 1px solid var(--line); border-top: 0; padding-left: 3px; }
.proplist { flex: 1; overflow: hidden; border-top: 1px solid var(--bg); }
table { width: 100%; border-collapse: separate; border-spacing: 0; table-layout: fixed; }
.c1 { width: 19px; }
.c2 { width: 84px; }
tr { height: 21px; }
td, th { padding: 0; text-align: left; font-weight: normal; border-bottom: 1px solid var(--bg); background: #fff; white-space: nowrap; height: 21px; line-height: 15px; }
td:first-child { background: #f7f7f9; border-left: 1px solid var(--bg); }
tr:not(.group) th { padding-left: 4px; border-right: 1px solid var(--bg); }
.group th { height: 26px; background: #f7f7f9; font-size: 13px; padding-left: 3px; border-left: 1px solid var(--bg); }
td input { display: block; width: 100%; height: 20px; padding-left: 4px; }
.off { color: #737373; }
.off td:last-child, .ro { background: var(--bg); }
.place { display: block; width: 99px; height: 19px; margin-left: 1px; background: #e1e1e1; border: 1px solid #adadad; }
.pick { position: relative; }
.pick select { display: block; width: 100%; height: 20px; appearance: none; padding-left: 3px; }
.pick svg { position: absolute; right: 0; top: 0; width: 20px; height: 20px; padding: 5px 4px; background: #e3e3e3; border: 1px solid #adadad; fill: none; stroke: #444; pointer-events: none; }
.file { display: flex; justify-content: space-between; padding-left: 2px; }
.file span { line-height: 20px; }
.file button { width: 19px; height: 19px; background: #e1e1e1; border: 1px solid #adadad; line-height: 12px; }
.scroll { width: 16px; margin: 0 4px 0 4px; background: #f0f0f0; display: flex; flex-direction: column; }
.scroll button { height: 17px; }
.thumb { background: #cdcdcd; flex: 1; margin-bottom: 21px; }

input[type="checkbox"] { appearance: none; width: 13px; height: 13px; border: 1px solid #333; background: #fff; display: inline-grid; place-items: center; flex: none; padding: 0; }
input[type="checkbox"]:checked::after { content: ""; width: 9px; height: 4px; margin-top: -3px; border: 1px solid #333; border-width: 0 0 1px 1px; transform: rotate(-45deg); }
.show input[type="checkbox"] { display: grid; margin-left: 2px; }
.osnap { flex: none; height: 22px; display: grid; grid-template-columns: 43px 48px 51px 44px 44px 37px 47px 43px 52px 48px 56px 68px auto; justify-content: start; margin-left: 3px; padding-left: 4px; border-left: 2px solid #d5d9e6; }
.osnap label { display: flex; align-items: center; gap: 3px; white-space: nowrap; }
.osnap .flat input { width: 11px; height: 11px; border-color: #adadad; background: #e1e1e1; margin-right: 1px; }

.status { flex: none; height: 20px; display: grid; grid-template-columns: 50px 88px 88px 88px 88px 168px 65px 45px 47px 48px 74px 59px 92px 37px 1fr; border-top: 1px solid var(--line); line-height: 19px; text-align: center; white-space: nowrap; }
.status > * { border-right: 1px solid var(--line); overflow: hidden; }
.status .on { background: #e2f3fe; font-weight: bold; }
.status .layer { display: flex; align-items: center; gap: 2px; padding-left: 3px; }
.layer i { width: 14px; height: 14px; background: #000; }
.status .mem { border: 0; text-align: left; padding-left: 2px; }

.dialog { position: absolute; left: 198px; top: 222px; width: 214px; background: #fff; border: 1px solid #2583d2; }
.dlghead { display: flex; justify-content: space-between; align-items: center; height: 28px; padding: 0 9px 0 8px; }
.dlghead svg { width: 12px; height: 12px; fill: none; stroke: #111; stroke-width: 1; }
.dlgbody { display: flex; align-items: center; gap: 9px; height: 80px; padding: 2px 0 0 21px; }
.dlgbody svg { width: 32px; height: 32px; }
.dlgfoot { display: flex; justify-content: flex-end; align-items: center; height: 42px; padding-right: 16px; background: #f0f0f0; }
.dlgfoot button { width: 73px; height: 21px; background: #e1e1e1; border: 2px solid #0078d7; line-height: 15px; }
```

FILE: grid.js
```js
// Draws the construction-plane grid as a perspective projection of a unit square.
const A = [346, 535.7], B = [751.5, 671], C = [874.6, 441.7], D = [553, 368.7];

// Projective coefficients mapping (0,0)->A, (1,0)->B, (1,1)->C, (0,1)->D.
const dx1 = B[0] - C[0], dx2 = D[0] - C[0], sx = A[0] - B[0] + C[0] - D[0];
const dy1 = B[1] - C[1], dy2 = D[1] - C[1], sy = A[1] - B[1] + C[1] - D[1];
const det = dx1 * dy2 - dx2 * dy1;
const g = (sx * dy2 - dx2 * sy) / det;
const h = (dx1 * sy - sx * dy1) / det;

function project(u, v) {
  const w = g * u + h * v + 1;
  const x = (B[0] - A[0] + g * B[0]) * u + (D[0] - A[0] + h * D[0]) * v + A[0];
  const y = (B[1] - A[1] + g * B[1]) * u + (D[1] - A[1] + h * D[1]) * v + A[1];
  return (x / w).toFixed(1) + " " + (y / w).toFixed(1);
}

function lines(n) {
  let d = "";
  for (let i = 0; i <= n; i++) {
    const t = i / n;
    d += `M${project(t, 0)}L${project(t, 1)}M${project(0, t)}L${project(1, t)}`;
  }
  return d;
}

document.getElementById("minor").setAttribute("d", lines(100));
document.getElementById("major").setAttribute("d", lines(10));
```
